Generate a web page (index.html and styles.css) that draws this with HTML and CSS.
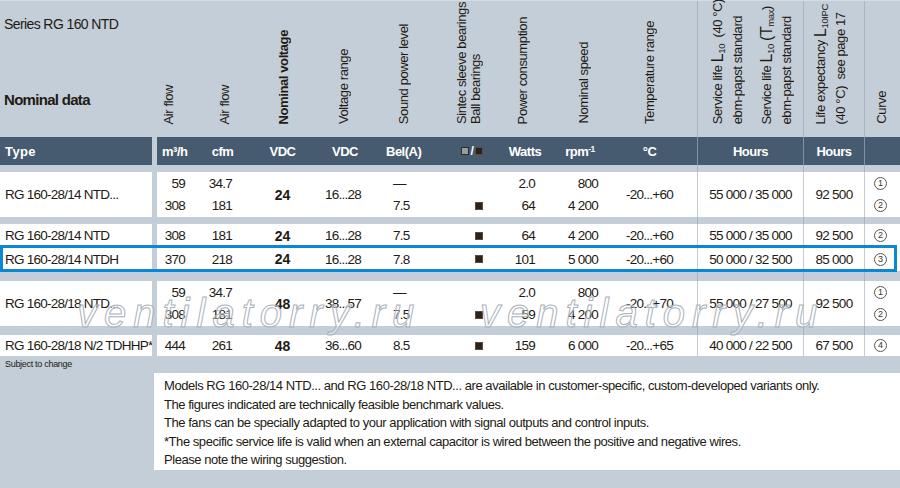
FILE: index.html
```html
<!DOCTYPE html>
<html>
<head>
<meta charset="utf-8">
<link rel="stylesheet" href="styles.css">
</head>
<body>
<div class="sheet">
  <div class="table">
    <div class="grid head">
      <div class="titles">
        <div class="series">Series RG 160 NTD</div>
        <div class="nominal">Nominal data</div>
      </div>
      <div></div>
      <div class="lbl l1">Air flow</div>
      <div class="lbl l2">Air flow</div>
      <div class="lbl l3 bold">Nominal voltage</div>
      <div class="lbl l4">Voltage range</div>
      <div class="lbl l5">Sound power level</div>
      <div class="lbl l6">Sintec sleeve bearings<br>Ball bearings</div>
      <div class="lbl l7">Power consumption</div>
      <div class="lbl l8">Nominal speed</div>
      <div class="lbl l9">Temperature range</div>
      <div class="hpair">
        <div class="lbl lp">Service life <span class="big">L</span><span class="sub">10</span>&nbsp; (40 °C)<br>ebm-papst standard</div>
        <div class="lbl lp">Service life <span class="big">L</span><span class="sub">10</span> <span class="big">(T</span><span class="sub">max</span>)<br>ebm-papst standard</div>
      </div>
      <div class="lbl lp l11">Life expectancy <span class="big">L</span><span class="sub">10IPC</span><br>(40 °C)&nbsp; see page 17</div>
      <div class="lbl l12">Curve</div>
    </div>

    <div class="grid units">
      <div class="u-type">Type</div>
      <div class="gap"></div>
      <div class="u1">m³/h</div>
      <div>cfm</div>
      <div>VDC</div>
      <div>VDC</div>
      <div class="u5">Bel(A)</div>
      <div class="u6"><span class="sq grey"></span><span class="slash">/</span><span class="sq"></span></div>
      <div>Watts</div>
      <div>rpm<span class="sup">-1</span></div>
      <div class="u9">°C</div>
      <div class="line">Hours</div>
      <div class="line">Hours</div>
      <div class="line"></div>
    </div>

    <div class="grid row two g1">
      <div class="type span">RG 160-28/14 NTD...</div>
      <div class="gap"></div>
      <div class="d1 r1">59</div><div class="d1 r2">308</div>
      <div class="d2 r1">34.7</div><div class="d2 r2">181</div>
      <div class="d3 span"><b>24</b></div>
      <div class="d4 span">16...28</div>
      <div class="d5 r1">—</div><div class="d5 r2">7.5</div>
      <div class="d6 r2"><span class="sq"></span></div>
      <div class="d7 r1">2.0</div><div class="d7 r2">64</div>
      <div class="d8 r1">800</div><div class="d8 r2">4 200</div>
      <div class="d9 span">-20...+60</div>
      <div class="d10 span">55 000 / 35 000</div>
      <div class="d11 span">92 500</div>
      <div class="d12 r1"><span class="circ">1</span></div><div class="d12 r2"><span class="circ">2</span></div>
    </div>

    <div class="grid row one g2">
      <div class="type">RG 160-28/14 NTD</div>
      <div class="gap"></div>
      <div class="d1">308</div>
      <div class="d2">181</div>
      <div class="d3"><b>24</b></div>
      <div class="d4">16...28</div>
      <div class="d5">7.5</div>
      <div class="d6"><span class="sq"></span></div>
      <div class="d7">64</div>
      <div class="d8">4 200</div>
      <div class="d9">-20...+60</div>
      <div class="d10">55 000 / 35 000</div>
      <div class="d11">92 500</div>
      <div class="d12"><span class="circ">2</span></div>
    </div>

    <div class="grid row one g3 hl">
      <div class="type">RG 160-28/14 NTDH</div>
      <div class="gap"></div>
      <div class="d1">370</div>
      <div class="d2">218</div>
      <div class="d3"><b>24</b></div>
      <div class="d4">16...28</div>
      <div class="d5">7.8</div>
      <div class="d6"><span class="sq"></span></div>
      <div class="d7">101</div>
      <div class="d8">5 000</div>
      <div class="d9">-20...+60</div>
      <div class="d10">50 000 / 32 500</div>
      <div class="d11">85 000</div>
      <div class="d12"><span class="circ">3</span></div>
    </div>

    <div class="grid row two g4">
      <div class="type span">RG 160-28/18 NTD...</div>
      <div class="gap"></div>
      <div class="d1 r1">59</div><div class="d1 r2">308</div>
      <div class="d2 r1">34.7</div><div class="d2 r2">181</div>
      <div class="d3 span"><b>48</b></div>
      <div class="d4 span">38...57</div>
      <div class="d5 r1">—</div><div class="d5 r2">7.5</div>
      <div class="d6 r2"><span class="sq"></span></div>
      <div class="d7 r1">2.0</div><div class="d7 r2">59</div>
      <div class="d8 r1">800</div><div class="d8 r2">4 200</div>
      <div class="d9 span">-20...+70</div>
      <div class="d10 span">55 000 / 27 500</div>
      <div class="d11 span">92 500</div>
      <div class="d12 r1"><span class="circ">1</span></div><div class="d12 r2"><span class="circ">2</span></div>
    </div>

    <div class="grid row one g5">
      <div class="type">RG 160-28/18 N/2 TDHHP*</div>
      <div class="gap"></div>
      <div class="d1">444</div>
      <div class="d2">261</div>
      <div class="d3"><b>48</b></div>
      <div class="d4">36...60</div>
      <div class="d5">8.5</div>
      <div class="d6"><span class="sq"></span></div>
      <div class="d7">159</div>
      <div class="d8">6 000</div>
      <div class="d9">-20...+65</div>
      <div class="d10">40 000 / 22 500</div>
      <div class="d11">67 500</div>
      <div class="d12"><span class="circ">4</span></div>
    </div>
  </div>

  <div class="subject">Subject to change</div>

  <div class="note">
    <div>Models RG 160-28/14 NTD... and RG 160-28/18 NTD... are available in customer-specific, custom-developed variants only.</div>
    <div>The figures indicated are technically feasible benchmark values.</div>
    <div>The fans can be specially adapted to your application with signal outputs and control inputs.</div>
    <div>*The specific service life is valid when an external capacitor is wired between the positive and negative wires.</div>
    <div>Please note the wiring suggestion.</div>
  </div>

  <div class="wm wm1">ventilatorry.ru</div>
  <div class="wm wm2">ventilatorry.ru</div>
</div>
</body>
</html>
```

FILE: styles.css
```css
* { box-sizing: border-box; margin: 0; padding: 0; }

body {
  width: 900px;
  height: 488px;
  overflow: hidden;
  background: #c4ced8;
  color: #231a13;
  font-family: "Liberation Sans", Arial, sans-serif;
  font-size: 13px;
}

.sheet { position: relative; width: 900px; height: 488px; }

.table {
  background-color: #c4ced8;
  background-image:
    linear-gradient(#a8b3bf, #a8b3bf),
    linear-gradient(#a8b3bf, #a8b3bf),
    linear-gradient(#a8b3bf, #a8b3bf);
  background-size: 1px 100%;
  background-repeat: no-repeat;
  background-position: 697px 0, 803px 0, 864px 0;
}

.grid {
  display: grid;
  grid-template-columns: 152px 5px 38px 55px 65px 60px 65px 60px 50px 60px 87px 106px 61px 36px;
}

/* ---------- header with rotated labels ---------- */
.head {
  height: 137px;
  grid-template-rows: 123px;
  padding-bottom: 13px;
  border-top: 1px solid #d3dbe3;
}

.titles { display: flex; flex-direction: column; padding-left: 4px; }
.series { font-size: 14px; line-height: 16px; margin-top: 15px; letter-spacing: -0.6px; }
.nominal { font-size: 15px; line-height: 18px; font-weight: bold; margin-top: 59px; letter-spacing: -0.7px; }

.lbl {
  writing-mode: vertical-rl;
  transform: rotate(180deg);
  align-self: end;
  justify-self: start;
  white-space: nowrap;
  font-size: 13px;
  line-height: 15px;
  letter-spacing: -0.4px;
}
.bold { font-weight: bold; }
.l1 { margin-left: 4px; }
.l2 { margin-left: 22px; }
.l3 { margin-left: 26px; }
.l4 { margin-left: 21px; }
.l5 { margin-left: 21px; }
.l6 { margin-left: 15px; line-height: 14px; }
.l7 { margin-left: 15px; }
.l8 { margin-left: 26px; }
.l9 { margin-left: 32px; }
.l11 { margin-left: 10px; }
.l12 { margin-left: 10px; }

.lp { line-height: 16px; }
.hpair {
  display: flex;
  align-self: end;
  align-items: flex-end;
  gap: 13px;
  margin-left: 13px;
}
.hpair .lbl { align-self: auto; }
.big { font-size: 16px; }
.sub { font-size: 9.5px; vertical-align: sub; }

/* ---------- units band ---------- */
.units {
  height: 28px;
  background: #465b70;
  color: #fff;
  font-weight: bold;
  font-size: 13px;
  letter-spacing: -0.5px;
}
.units > div { display: flex; align-items: center; justify-content: center; }
.units .u-type { justify-content: flex-start; padding-left: 5px; letter-spacing: 0.4px; }
.units .gap { background: #c4ced8; }
.units .u1 { justify-content: flex-start; padding-left: 5px; }
.units .u5 { justify-content: flex-start; padding-left: 11px; }
.units .u6 { gap: 2px; padding-left: 4px; }
.units .u9 { padding-right: 8px; }
.units .line { border-left: 1px solid #7f91a4; }
.sup { font-size: 8.5px; align-self: flex-start; margin-top: 7px; }

.sq {
  display: inline-block;
  width: 8px;
  height: 8px;
  background: #2e2118;
  box-shadow: inset 0 0 0 1px #5b4c40;
}
.sq.grey { background: #9c9c9c; box-shadow: inset 0 0 0 1px #2d2a28; }
.slash { font-size: 12px; }

/* ---------- data rows ---------- */
.row { background: #fff; position: relative; font-size: 13.5px; letter-spacing: -0.75px; }
.row > div { display: flex; align-items: center; white-space: nowrap; }
.row .gap { grid-column: 2; grid-row: 1 / -1; background: #c4ced8; }
.one { grid-template-rows: 23px; }
.two { grid-template-rows: 22px 23px; }
.g1 { margin-top: 7px; }
.g2 { margin-top: 7px; }
.g3 { grid-template-rows: 24px; }
.g4 { margin-top: 10px; }
.g5 { margin-top: 9px; grid-template-rows: 21px; }

.span { grid-row: 1 / -1; }
.r1 { grid-row: 1; }
.r2 { grid-row: 2; }

.type { grid-column: 1; padding-left: 5px; }
.d1 { grid-column: 3; justify-content: flex-end; padding-right: 10px; }
.d2 { grid-column: 4; justify-content: flex-end; padding-right: 18px; }
.d3 { grid-column: 5; justify-content: center; }
.d4 { grid-column: 6; padding-left: 10px; }
.d5 { grid-column: 7; padding-left: 18px; }
.d6 { grid-column: 8; padding-left: 35px; }
.d7 { grid-column: 9; justify-content: flex-end; padding-right: 15px; }
.d8 { grid-column: 10; justify-content: flex-end; padding-right: 12px; }
.d9 { grid-column: 11; justify-content: center; padding-right: 8px; }
.d10 { grid-column: 12; justify-content: center; border-left: 1px solid #c3cbd3; }
.d11 { grid-column: 13; justify-content: center; border-left: 1px solid #c3cbd3; }
.d12 { grid-column: 14; justify-content: center; border-left: 1px solid #c3cbd3; padding-right: 4px; }

.row b { font-size: 14px; letter-spacing: 0; }

.circ {
  display: flex;
  align-items: center;
  justify-content: center;
  width: 13px;
  height: 13px;
  border: 1px solid #5a544e;
  border-radius: 50%;
  font-size: 9px;
  line-height: 1;
  letter-spacing: 0;
  color: #3a342e;
}

.hl::after {
  content: "";
  position: absolute;
  left: 0;
  right: 3px;
  top: -2px;
  bottom: -1px;
  border: 3px solid #0b87d6;
  z-index: 2;
}

/* ---------- footer ---------- */
.subject {
  height: 17px;
  line-height: 17px;
  padding-left: 5px;
  font-size: 9px;
  letter-spacing: -0.3px;
}

.note {
  margin-left: 154px;
  height: 97px;
  background: #fff;
  padding: 4px 0 0 10px;
  font-size: 13px;
  line-height: 18.5px;
  letter-spacing: -0.45px;
}

/* ---------- watermark overlay ---------- */
.wm {
  position: absolute;
  top: 293px;
  font-family: "Liberation Sans", sans-serif;
  font-style: italic;
  font-size: 40px;
  line-height: 40px;
  letter-spacing: 7px;
  color: rgba(255, 255, 255, 0.4);
  -webkit-text-stroke: 1px #aab2bb;
  white-space: nowrap;
  z-index: 3;
  pointer-events: none;
}
.wm1 { left: 77px; }
.wm2 { left: 480px; }
```
